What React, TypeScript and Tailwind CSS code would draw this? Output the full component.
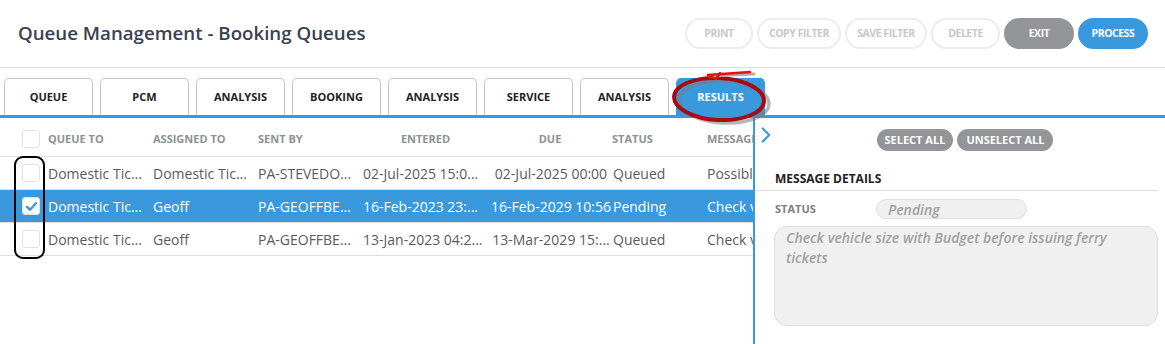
import { ChevronRight } from 'lucide-react';

const tabs = ['QUEUE', 'PCM', 'ANALYSIS', 'BOOKING', 'ANALYSIS', 'SERVICE', 'ANALYSIS', 'RESULTS'];

const rows = [
  {
    queueTo: 'Domestic Tic...',
    assignedTo: 'Domestic Tic...',
    sentBy: 'PA-STEVEDO...',
    entered: '02-Jul-2025 15:0...',
    due: '02-Jul-2025 00:00',
    status: 'Queued',
    message: 'Possible',
    selected: false,
  },
  {
    queueTo: 'Domestic Tic...',
    assignedTo: 'Geoff',
    sentBy: 'PA-GEOFFBE...',
    entered: '16-Feb-2023 23:...',
    due: '16-Feb-2029 10:56',
    status: 'Pending',
    message: 'Check vehicle',
    selected: true,
  },
  {
    queueTo: 'Domestic Tic...',
    assignedTo: 'Geoff',
    sentBy: 'PA-GEOFFBE...',
    entered: '13-Jan-2023 04:2...',
    due: '13-Mar-2029 15:...',
    status: 'Queued',
    message: 'Check vehicle',
    selected: false,
  },
];

const cols = 'grid grid-cols-[48px_105px_105px_105px_125px_124px_95px_1fr]';

function Checkbox({ checked }: { checked?: boolean }) {
  return (
    <div className="flex h-[18px] w-[18px] items-center justify-center rounded-[3px] border border-[#e2e2e2] bg-white">
      {checked && (
        <svg viewBox="0 0 16 16" className="h-[13px] w-[13px]">
          <path d="M2.5 8.5 L6.2 12 L13.5 4" fill="none" stroke="#3a99dc" strokeWidth="3" strokeLinecap="round" strokeLinejoin="round" />
        </svg>
      )}
    </div>
  );
}

function TopButton({ label, variant, w }: { label: string; variant: 'ghost' | 'gray' | 'blue'; w: string }) {
  const cls =
    variant === 'ghost'
      ? 'border-2 border-[#eceeee] text-[#c5c9cb] bg-white'
      : variant === 'gray'
        ? 'bg-[#939598] text-white border-2 border-[#939598]'
        : 'bg-[#3a99dc] text-white border-2 border-[#3a99dc]';
  return (
    <button className={`h-[31px] ${w} rounded-full text-[10.5px] font-bold tracking-[-0.45px] ${cls}`}>
      {label}
    </button>
  );
}

export default function App() {
  return (
    <div className="relative h-[344px] w-[1165px] overflow-hidden bg-white font-['Open_Sans',sans-serif]">
      {/* header */}
      <div className="flex h-[68px] items-center justify-between border-b border-[#dcdce6] pl-[18px] pr-[17px]">
        <h1 className="text-[18.7px] font-semibold text-[#3a4152]">Queue Management - Booking Queues</h1>
        <div className="flex items-center gap-[4px]">
          <TopButton label="PRINT" variant="ghost" w="w-[68px]" />
          <TopButton label="COPY FILTER" variant="ghost" w="w-[84px]" />
          <TopButton label="SAVE FILTER" variant="ghost" w="w-[82px]" />
          <TopButton label="DELETE" variant="ghost" w="w-[69px]" />
          <TopButton label="EXIT" variant="gray" w="w-[70px]" />
          <TopButton label="PROCESS" variant="blue" w="w-[70px]" />
        </div>
      </div>

      {/* tabs */}
      <div className="mt-[10px] flex items-end gap-[7px] border-b-[3px] border-[#3a99dc] pl-[4px]">
        {tabs.map((t, i) => {
          const active = t === 'RESULTS';
          return (
            <div
              key={i}
              className={`flex h-[37px] w-[89px] items-center justify-center rounded-t-[5px] border border-b-0 text-[11px] font-bold ${
                active ? 'border-[#3a99dc] bg-[#3a99dc] text-white' : 'border-[#c4c4c4] bg-white text-[#222]'
              }`}
            >
              {t}
            </div>
          );
        })}
      </div>

      {/* body */}
      <div className="flex h-[227px]">
        <div className="w-[753px] shrink-0 overflow-hidden">
          <div className={`${cols} h-[39px] items-center border-b border-[#dedede] pt-[4px] text-[11px] font-bold text-[#8b9293]`}>
            <div className="flex justify-end pr-[8px]">
              <Checkbox />
            </div>
            <div>QUEUE TO</div>
            <div>ASSIGNED TO</div>
            <div>SENT BY</div>
            <div className="text-center">ENTERED</div>
            <div className="text-center">DUE</div>
            <div>STATUS</div>
            <div className="overflow-hidden whitespace-nowrap">MESSAGE</div>
          </div>
          {rows.map((r, i) => (
            <div
              key={i}
              className={`${cols} h-[33px] items-center border-b border-[#dedede] text-[14px] whitespace-nowrap ${
                r.selected ? 'bg-[#3a99dc] text-white' : 'text-[#5b5b5b]'
              }`}
            >
              <div className="flex justify-end pr-[8px]">
                <Checkbox checked={r.selected} />
              </div>
              <div className="overflow-hidden">{r.queueTo}</div>
              <div className="overflow-hidden">{r.assignedTo}</div>
              <div className="overflow-hidden">{r.sentBy}</div>
              <div className="overflow-hidden">{r.entered}</div>
              <div className="overflow-hidden pl-[2px] text-center">{r.due}</div>
              <div className="overflow-hidden pl-[1px]">{r.status}</div>
              <div className="overflow-hidden">{r.message}</div>
            </div>
          ))}
        </div>

        {/* right panel */}
        <div className="flex-1 border-l-[2px] border-[#3a99dc]">
          <div className="relative flex h-[42px] items-center justify-center gap-[4px] pl-[10px] pt-[2px]">
            <ChevronRight className="absolute left-[-2px] top-[4px] h-[26px] w-[26px] text-[#3a99dc]" strokeWidth={2} />
            <button className="h-[22px] rounded-full bg-[#939598] px-[8px] text-[11px] font-bold text-white">SELECT ALL</button>
            <button className="h-[22px] rounded-full bg-[#939598] px-[9px] text-[11px] font-bold text-white">UNSELECT ALL</button>
          </div>
          <div className="mr-[7px] border-b border-[#dcdce6] pb-[2px] pl-[20px] pt-[10px] text-[12px] font-bold text-[#222]">
            MESSAGE DETAILS
          </div>
          <div className="mt-[8px] flex items-center pl-[20px]">
            <div className="w-[101px] text-[11px] font-bold text-[#7b8080]">STATUS</div>
            <div className="flex h-[20px] w-[151px] items-center rounded-full border border-[#dedede] bg-[#f0f0f0] pl-[11px] text-[14px] font-semibold italic text-[#9ca3a4]">
              Pending
            </div>
          </div>
          <div className="ml-[19px] mr-[7px] mt-[7px] h-[100px] rounded-[13px] border border-[#dedede] bg-[#f0f0f0] px-[11px] pt-[1px] text-[14px] font-semibold italic leading-[20px] text-[#9ca3a4]">
            Check vehicle size with Budget before issuing ferry tickets
          </div>
        </div>
      </div>

      {/* annotation: black rounded rectangle around checkboxes */}
      <div className="pointer-events-none absolute left-[14px] top-[156px] h-[103px] w-[31px] rounded-[9px] border-2 border-black" />

      {/* annotation: red ellipse around RESULTS tab */}
      <svg className="pointer-events-none absolute left-[666px] top-[66px]" width="110" height="62" viewBox="0 0 110 62">
        <ellipse cx="55" cy="34" rx="45" ry="21" fill="none" stroke="#7a7a7a" strokeOpacity="0.55" strokeWidth="3.5" transform="translate(3 2) rotate(3 55 34)" />
        <ellipse cx="53" cy="33" rx="45" ry="21" fill="none" stroke="#a80a10" strokeWidth="4" transform="rotate(3 53 33)" />
        <path d="M44 10 L88 8" stroke="#b0b0b0" strokeWidth="3" strokeLinecap="round" />
        <path d="M42 9 L84 6" stroke="#e8100f" strokeWidth="2.5" strokeLinecap="round" />
        <path d="M42 9 L50 13 L54 7" fill="none" stroke="#e8100f" strokeWidth="2.5" strokeLinecap="round" strokeLinejoin="round" />
      </svg>
    </div>
  );
}
